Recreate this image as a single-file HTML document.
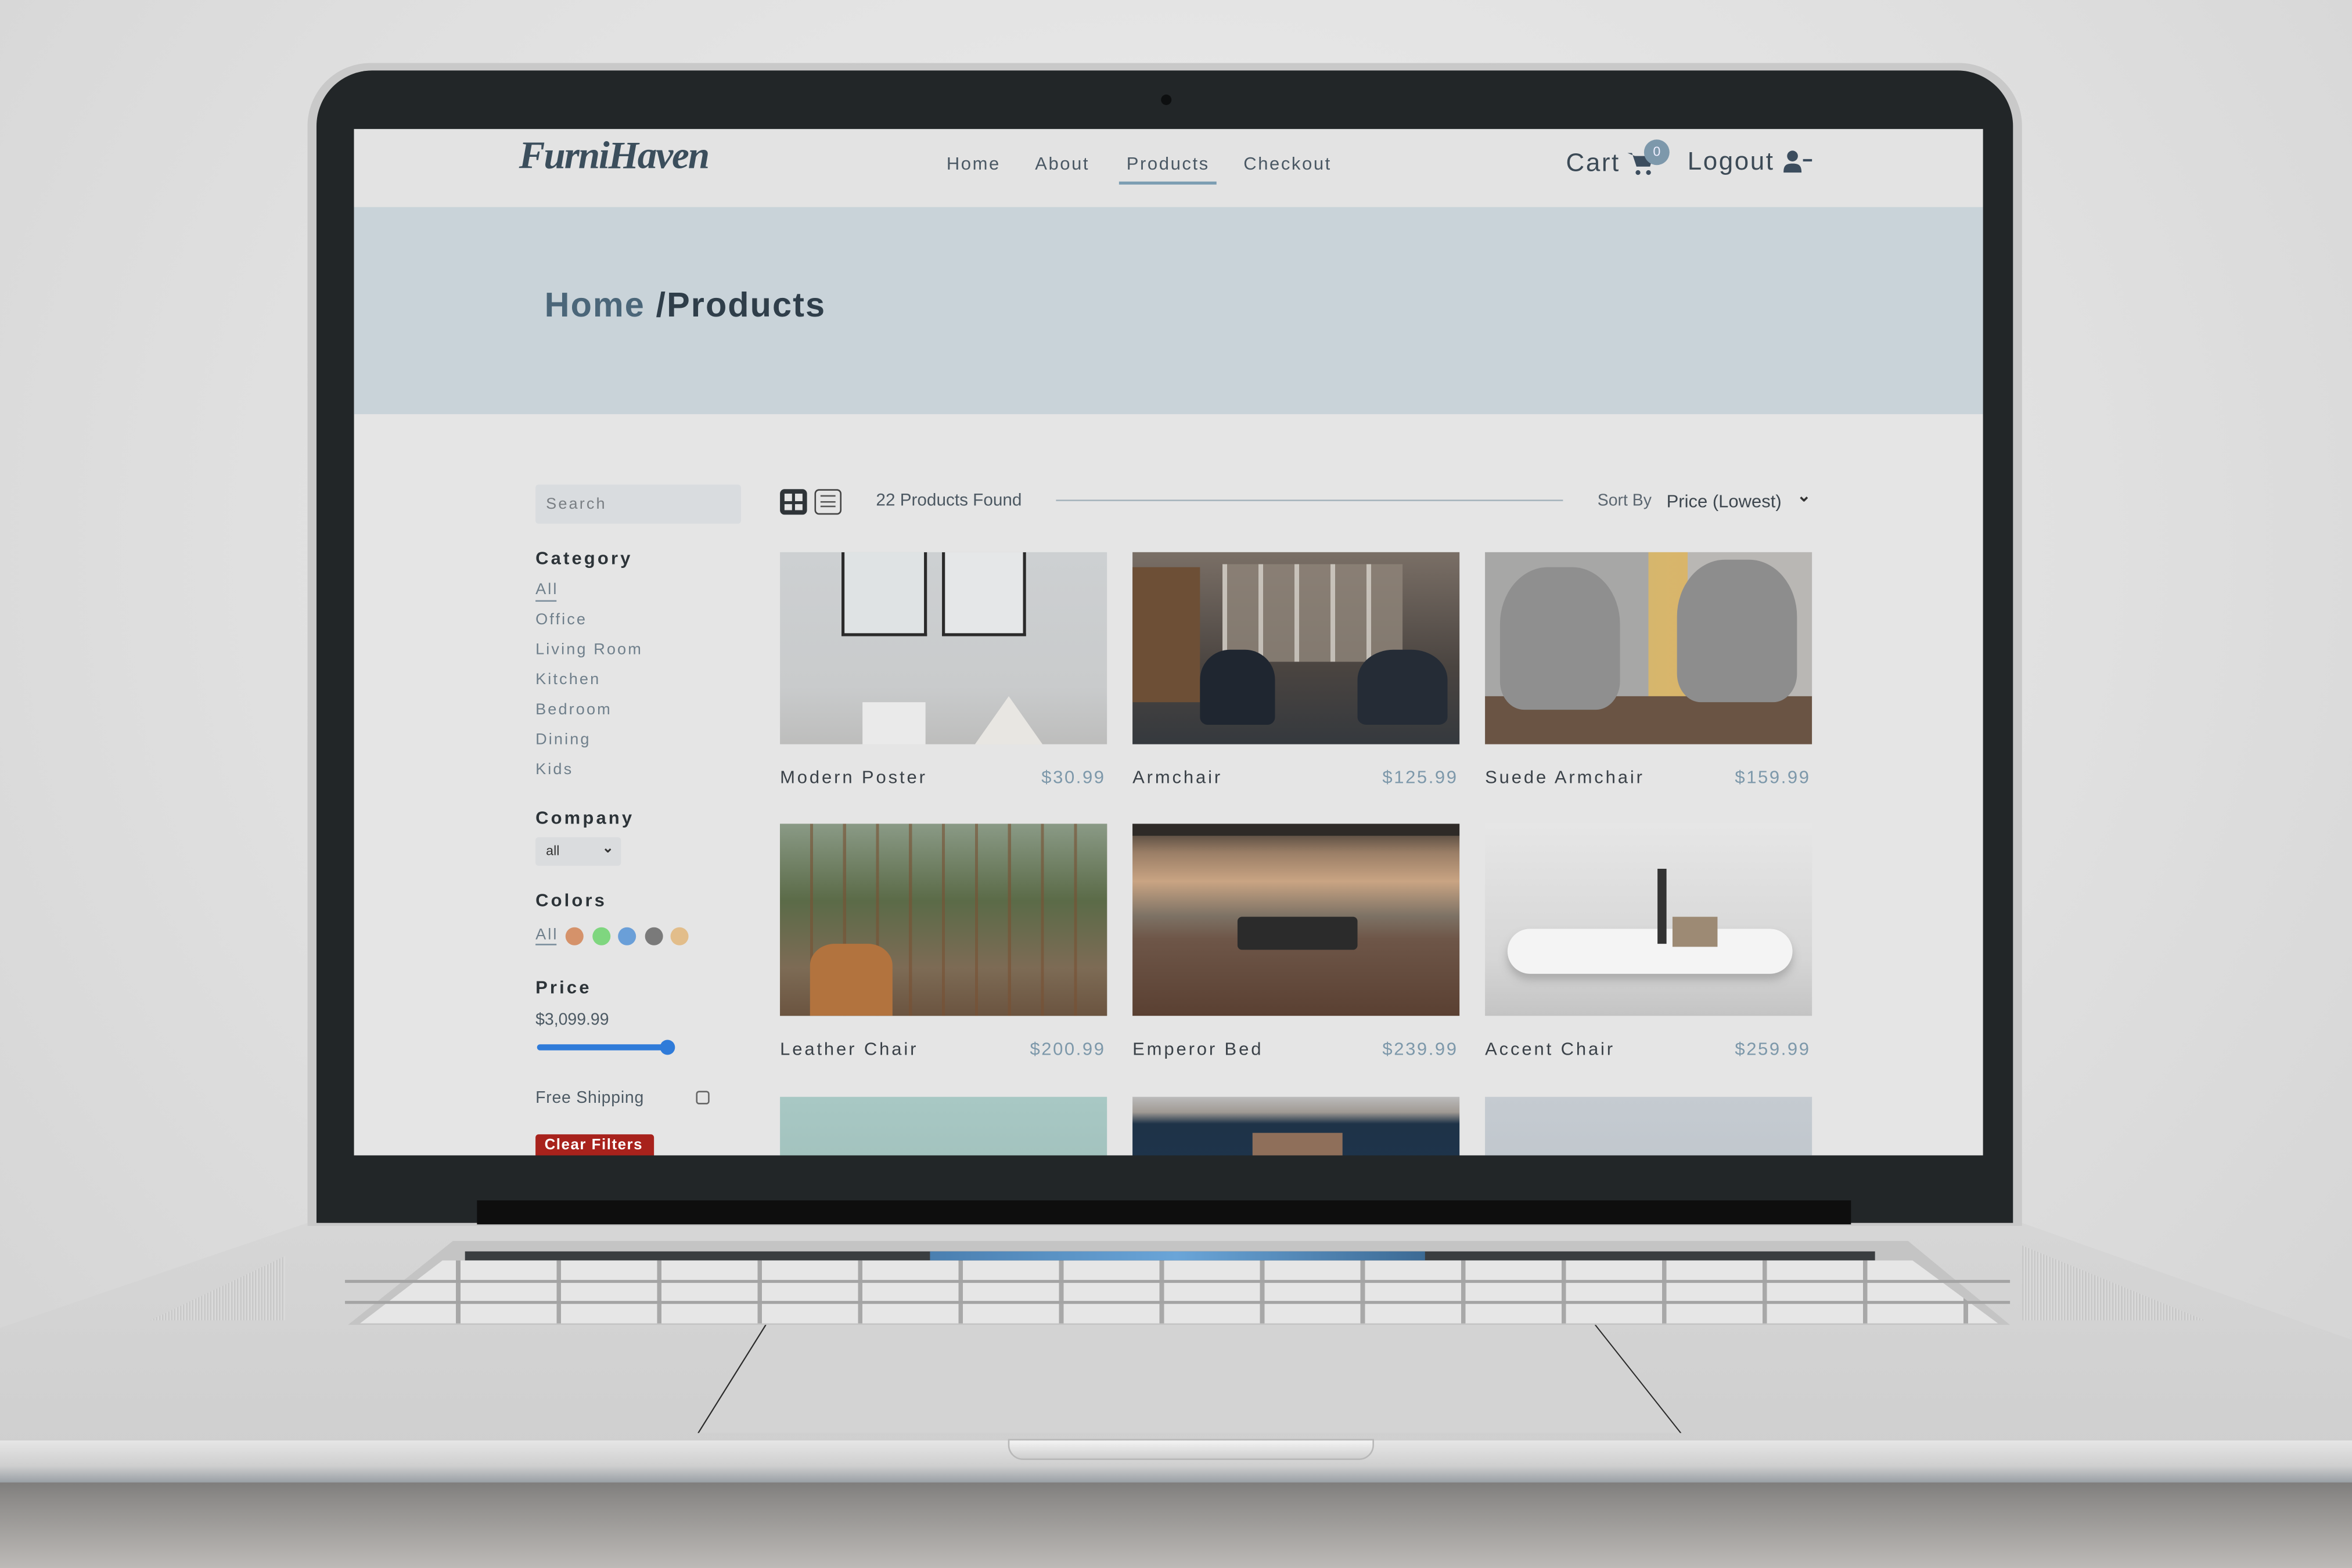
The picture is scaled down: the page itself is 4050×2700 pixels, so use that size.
<!DOCTYPE html>
<html><head><meta charset="utf-8"><style>
*{margin:0;padding:0;box-sizing:border-box}
html,body{width:4050px;height:2700px;overflow:hidden;background:#dedede}
#w{position:absolute;left:0;top:0;width:1568px;height:1045px;transform:scale(2.58291,2.58373);transform-origin:0 0;font-family:"Liberation Sans",sans-serif;
background:radial-gradient(ellipse at 50% 35%,#eeeeee 0%,#e0e0e0 55%,#d2d2d2 100%)}
.a{position:absolute}
.floor{left:0;top:975px;width:1568px;height:70px;background:linear-gradient(#6d6d6d 0%,#8e8c8a 35%,#bdbab7 100%)}
.lid{left:205px;top:42px;width:1143px;height:775px;border-radius:42px 42px 0 0;background:#c9c9c9}
.bez{left:211px;top:47px;width:1131px;height:768px;border-radius:37px 37px 0 0;background:#222628}
.cam{left:774px;top:63px;width:7px;height:7px;border-radius:50%;background:#0d0f10}
.scr{left:236px;top:86px;width:1086px;height:684px;background:#e5e5e5;overflow:hidden}
.hinge{left:318px;top:800px;width:916px;height:16px;background:#0e0e0e}
.base{left:0;top:815px;width:1568px;height:150px;background:linear-gradient(#d6d6d6,#cfcfcf);clip-path:polygon(205px 0,1348px 0,1568px 78px,1568px 150px,0 150px,0 70px)}
.front{left:0;top:960px;width:1568px;height:28px;background:linear-gradient(#e6e6e6,#cfcfcf 60%,#9aa0a6)}
.kb{left:232px;top:827px;width:1108px;height:56px;background:#c4c4c4;clip-path:polygon(70px 0,1040px 0,1108px 56px,0 56px)}
.tb{left:310px;top:834px;width:940px;height:6px;background:#3a3d40}
.tbc{left:620px;top:834px;width:330px;height:6px;background:linear-gradient(90deg,#4a7fb0,#6aa5d8,#3c6a94)}
.keys{left:240px;top:840px;width:1092px;height:42px;
background:repeating-linear-gradient(90deg,#e6e6e6 0 64px,#a8a8a8 64px 67px);clip-path:polygon(55px 0,1035px 0,1092px 42px,0 42px)}
.krow{left:230px;height:2px;width:1110px;background:#a4a4a4}
.tp{left:465px;top:883px;width:656px;height:72px;background:#d3d3d3;clip-path:polygon(45px 0,598px 0,656px 72px,0 72px)}
.tpl{left:465px;top:883px;width:656px;height:72px;background:#2a2a2a;clip-path:polygon(45px 0,46px 0,1px 72px,0 72px,0 72px);}
.tpr{left:465px;top:883px;width:656px;height:72px;background:#2a2a2a;clip-path:polygon(598px 0,599px 0,656px 72px,655px 72px)}
.notch{left:672px;top:959px;width:244px;height:14px;border-radius:0 0 10px 10px;background:linear-gradient(#f4f4f4,#cfcfcf);border:1px solid #b8b8b8}
.spk{top:830px;width:90px;height:50px;background:repeating-linear-gradient(90deg,#c8c8c8 0 1px,#dadada 1px 2px)}
.nav{left:0;top:0;width:1086px;height:52px;background:#e3e3e3}
.logo{left:110px;top:3px;font-family:"Liberation Serif",serif;font-style:italic;font-weight:bold;font-size:26px;color:#3b4e5c;letter-spacing:-.8px}
.nl{top:16px;font-size:12px;letter-spacing:1px;color:#4a5864}
.hero{left:0;top:52px;width:1086px;height:138px;background:#c9d3d9}
.bc{left:127px;top:104px;font-size:23px;font-weight:bold;letter-spacing:.8px;color:#2f3e4a}
.sb{font-size:10.5px;letter-spacing:1.2px;color:#6f7f8b;left:121px}
.h{font-size:12px;font-weight:bold;letter-spacing:1.6px;color:#2c3338;left:121px}
.img{width:218px;height:128px;overflow:hidden}
.nm{font-size:12px;letter-spacing:1.5px;color:#3a4148}
.pr{font-size:12px;letter-spacing:1px;color:#7d98aa;text-align:right;width:80px}
</style></head><body><div id="w">
<div class="a floor"></div>
<div class="a base"></div>
<div class="a spk" style="left:100px;clip-path:polygon(105px 0,105px 50px,0 50px)"></div>
<div class="a spk" style="left:1348px;width:122px;clip-path:polygon(0 0,122px 50px,0 50px)"></div>
<div class="a kb"></div>
<div class="a keys"></div>
<div class="a krow" style="top:853px"></div>
<div class="a krow" style="top:867px"></div>
<div class="a tb"></div><div class="a tbc"></div>
<div class="a tp"></div><div class="a tpl"></div><div class="a tpr"></div>
<div class="a front"></div>
<div class="a notch"></div>
<div class="a lid"></div>
<div class="a bez"></div>
<div class="a cam"></div>
<div class="a hinge"></div>
<div class="a scr">
 <div class="a nav"></div>
 <div class="a logo">FurniHaven</div>
 <div class="a nl" style="left:395px">Home</div>
 <div class="a nl" style="left:454px">About</div>
 <div class="a nl" style="left:515px">Products</div>
 <div class="a" style="left:510px;top:35px;width:65px;height:2px;background:#7b9db2"></div>
 <div class="a nl" style="left:593px">Checkout</div>
 <div class="a" style="left:808px;top:13px;font-size:17px;letter-spacing:1px;color:#3c4a56">Cart</div>
 <svg class="a" style="left:849px;top:14px" width="18" height="18" viewBox="0 0 18 18"><path d="M0 2h3l3 9h9l2-7H5" fill="#3c4d5e"/><path d="M4 4h13l-2 7H6z" fill="#3c4d5e"/><circle cx="7" cy="15" r="1.6" fill="#3c4d5e"/><circle cx="14" cy="15" r="1.6" fill="#3c4d5e"/></svg>
 <div class="a" style="left:860px;top:7px;width:17px;height:17px;border-radius:50%;background:#7d98ab;color:#eef;font-size:9px;text-align:center;line-height:16px">0</div>
 <div class="a" style="left:889px;top:12px;font-size:17px;letter-spacing:1px;color:#3c4a56">Logout</div>
 <svg class="a" style="left:953px;top:14px" width="20" height="16" viewBox="0 0 20 16"><circle cx="6" cy="4" r="3.6" fill="#3c4d5e"/><path d="M0 15c0-5 2-6 6-6s6 1 6 6z" fill="#3c4d5e"/><rect x="13" y="6" width="6" height="1.6" fill="#3c4d5e"/></svg>
 <div class="a hero"></div>
 <div class="a bc"><span style="color:#4b6679">Home </span>/Products</div>
 <div class="a" style="left:121px;top:237px;width:137px;height:26px;background:#d9dcdf;border-radius:2px"></div>
 <div class="a sb" style="left:128px;top:244px;color:#7a7f84">Search</div>
 <div class="a h" style="top:279px">Category</div>
 <div class="a sb" style="top:301px">All</div>
 <div class="a" style="left:121px;top:314px;width:14px;height:1px;background:#7b8e9c"></div>
 <div class="a sb" style="top:321px">Office</div>
 <div class="a sb" style="top:341px">Living Room</div>
 <div class="a sb" style="top:361px">Kitchen</div>
 <div class="a sb" style="top:381px">Bedroom</div>
 <div class="a sb" style="top:401px">Dining</div>
 <div class="a sb" style="top:421px">Kids</div>
 <div class="a h" style="top:452px">Company</div>
 <div class="a" style="left:121px;top:472px;width:57px;height:19px;background:#dadcde;border-radius:2px;font-size:9px;color:#333;padding:4px 7px">all<span style="position:absolute;right:5px;top:2px;font-size:9px;font-weight:bold">&#8964;</span></div>
 <div class="a h" style="top:507px">Colors</div>
 <div class="a sb" style="top:531px">All</div>
 <div class="a" style="left:121px;top:543px;width:14px;height:1px;background:#7b8e9c"></div>
 <div class="a" style="left:141px;top:532px;width:12px;height:12px;border-radius:50%;background:#d5926a"></div>
 <div class="a" style="left:159px;top:532px;width:12px;height:12px;border-radius:50%;background:#7fd67f"></div>
 <div class="a" style="left:176px;top:532px;width:12px;height:12px;border-radius:50%;background:#6a9fd8"></div>
 <div class="a" style="left:194px;top:532px;width:12px;height:12px;border-radius:50%;background:#7a7a7a"></div>
 <div class="a" style="left:211px;top:532px;width:12px;height:12px;border-radius:50%;background:#e2bd8a"></div>
 <div class="a h" style="top:565px">Price</div>
 <div class="a sb" style="top:588px;letter-spacing:0;font-size:11px;color:#4d5a64">$3,099.99</div>
 <div class="a" style="left:122px;top:610px;width:88px;height:4px;border-radius:2px;background:#2f7bd9"></div>
 <div class="a" style="left:204px;top:607px;width:10px;height:10px;border-radius:50%;background:#2f7bd9"></div>
 <div class="a sb" style="top:640px;font-size:11px;letter-spacing:.3px;color:#4d5a64">Free Shipping</div>
 <div class="a" style="left:228px;top:641px;width:9px;height:9px;border:1px solid #666;border-radius:2px"></div>
 <div class="a" style="left:121px;top:670px;width:79px;height:20px;background:#a8221c;border-radius:2px;color:#fff;font-size:10px;font-weight:bold;letter-spacing:.6px;padding:2px 6px;white-space:nowrap">Clear Filters</div>
 <div class="a" style="left:284px;top:240px;width:18px;height:17px;border-radius:3px;background:#2f3438"></div>
 <div class="a" style="left:287px;top:243px;width:5px;height:5px;background:#e5e5e5"></div><div class="a" style="left:294px;top:243px;width:5px;height:5px;background:#e5e5e5"></div>
 <div class="a" style="left:287px;top:250px;width:5px;height:4px;background:#e5e5e5"></div><div class="a" style="left:294px;top:250px;width:5px;height:4px;background:#e5e5e5"></div>
 <div class="a" style="left:307px;top:240px;width:18px;height:17px;border-radius:3px;border:1px solid #444"></div>
 <div class="a" style="left:311px;top:244px;width:10px;height:8px;border-top:1px solid #555;border-bottom:1px solid #555"></div>
 <div class="a" style="left:311px;top:248px;width:10px;height:1px;background:#555"></div>
 <div class="a" style="left:348px;top:242px;font-size:11.5px;color:#4c5862">22 Products Found</div>
 <div class="a" style="left:468px;top:247px;width:338px;height:1px;background:#a7b4bd"></div>
 <div class="a" style="left:829px;top:242px;font-size:11px;color:#5b6670">Sort By</div>
 <div class="a" style="left:875px;top:241px;font-size:12px;color:#3d464e">Price (Lowest)</div>
 <div class="a" style="left:962px;top:238px;font-size:11px;font-weight:bold;color:#333">&#8964;</div>
 <div class="a img" style="left:284px;top:282px;background:linear-gradient(#cdd0d2,#c9cbcc 70%,#bdbdbc)">
  <div class="a" style="left:41px;top:0;width:57px;height:56px;border:2px solid #2a2a2a;border-top:0;background:#dfe3e4"></div>
  <div class="a" style="left:108px;top:0;width:56px;height:56px;border:2px solid #2a2a2a;border-top:0;background:#e5e7e8"></div>
  <div class="a" style="left:130px;top:96px;width:45px;height:32px;background:#e8e6e2;clip-path:polygon(50% 0,100% 100%,0 100%)"></div>
  <div class="a" style="left:55px;top:100px;width:42px;height:28px;background:#eaeaea"></div></div>
 <div class="a img" style="left:519px;top:282px;background:linear-gradient(180deg,#7a6f66,#4a4440 60%,#35393e)">
  <div class="a" style="left:60px;top:8px;width:120px;height:65px;background:repeating-linear-gradient(90deg,#d8d3cb 0 3px,#8d8378 3px 24px),#b0a89e;opacity:.85"></div>
  <div class="a" style="left:0;top:10px;width:45px;height:90px;background:#6d4f36"></div>
  <div class="a" style="left:45px;top:65px;width:50px;height:50px;border-radius:40% 40% 10% 10%;background:#1f2630"></div>
  <div class="a" style="left:150px;top:65px;width:60px;height:50px;border-radius:40% 40% 10% 10%;background:#252c36"></div></div>
 <div class="a img" style="left:754px;top:282px;background:linear-gradient(90deg,#a7a7a6 0,#a7a7a6 50%,#d6b66d 50%,#d9b56a 62%,#b9b7b4 62%);">
  <div class="a" style="left:0;top:96px;width:218px;height:32px;background:#6a5444"></div>
  <div class="a" style="left:10px;top:10px;width:80px;height:95px;border-radius:40% 40% 20% 20%;background:#8f8f8f"></div>
  <div class="a" style="left:128px;top:5px;width:80px;height:95px;border-radius:40% 40% 20% 20%;background:#8d8d8d"></div></div>
 <div class="a nm" style="left:284px;top:425px">Modern Poster</div><div class="a pr" style="left:421px;top:425px">$30.99</div>
 <div class="a nm" style="left:519px;top:425px">Armchair</div><div class="a pr" style="left:656px;top:425px">$125.99</div>
 <div class="a nm" style="left:754px;top:425px">Suede Armchair</div><div class="a pr" style="left:891px;top:425px">$159.99</div>
 <div class="a img" style="left:284px;top:463px;background:linear-gradient(180deg,#8a9a86,#5b6b48 40%,#7d6b55 75%,#6b5440),#6f7458">
  <div class="a" style="left:0;top:0;width:218px;height:128px;background:repeating-linear-gradient(90deg,transparent 0 20px,rgba(120,80,50,.6) 20px 22px)"></div>
  <div class="a" style="left:20px;top:80px;width:55px;height:48px;border-radius:30% 30% 0 0;background:#b2733e"></div></div>
 <div class="a img" style="left:519px;top:463px;background:linear-gradient(180deg,#3a342f 0,#9a7e66 15%,#c9a483 30%,#7d7265 48%,#6e5648 60%,#5a4032 100%)">
  <div class="a" style="left:70px;top:62px;width:80px;height:22px;background:#2b2b2b;border-radius:3px"></div>
  <div class="a" style="left:0;top:0;width:218px;height:8px;background:#2e2a27"></div></div>
 <div class="a img" style="left:754px;top:463px;background:linear-gradient(180deg,#e6e6e6,#d6d6d6 70%,#c4c4c4)">
  <div class="a" style="left:15px;top:70px;width:190px;height:30px;border-radius:20px;background:#f4f4f4;box-shadow:0 4px 6px #aaa"></div>
  <div class="a" style="left:115px;top:30px;width:6px;height:50px;background:#333"></div>
  <div class="a" style="left:125px;top:62px;width:30px;height:20px;background:#9d8a74"></div></div>
 <div class="a nm" style="left:284px;top:606px">Leather Chair</div><div class="a pr" style="left:421px;top:606px">$200.99</div>
 <div class="a nm" style="left:519px;top:606px">Emperor Bed</div><div class="a pr" style="left:656px;top:606px">$239.99</div>
 <div class="a nm" style="left:754px;top:606px">Accent Chair</div><div class="a pr" style="left:891px;top:606px">$259.99</div>
 <div class="a img" style="left:284px;top:645px;background:linear-gradient(#a8c8c4,#98b7b2)"></div>
 <div class="a img" style="left:519px;top:645px;background:linear-gradient(#bbb 0,#a09a94 8%,#1e3348 14%,#1d3552)">
  <div class="a" style="left:80px;top:24px;width:60px;height:20px;background:#8f6f5a"></div></div>
 <div class="a img" style="left:754px;top:645px;background:linear-gradient(#c5cbd1,#b8bfc6)"></div>
</div>
</div></body></html>
